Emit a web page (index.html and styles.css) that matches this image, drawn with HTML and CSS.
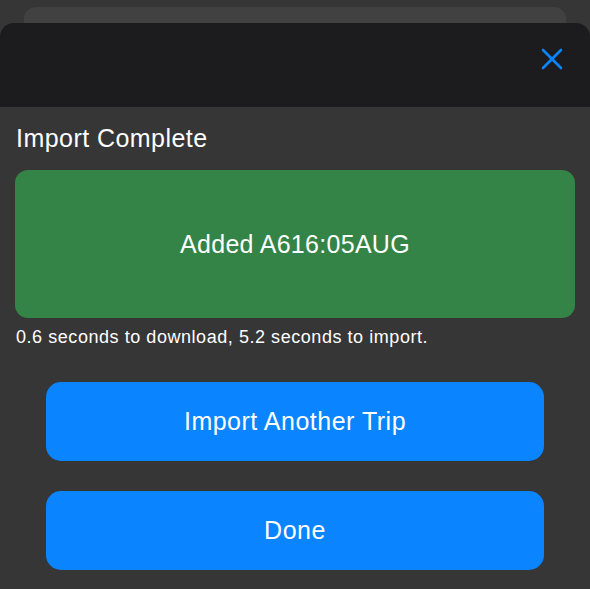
FILE: index.html
```html
<html lang="en">
<head>
    <meta charset="UTF-8">
    <meta name="viewport" content="width=device-width, initial-scale=1.0">
    <title>Import Complete</title>
    <link rel="stylesheet" href="styles.css">
</head>
<body>
    <div class="back-card"></div>
    <div class="sheet-header">
        <button class="close-btn" aria-label="Close">
            <svg width="22" height="22" viewBox="0 0 22 22">
                <path d="M2 2 L20 20 M20 2 L2 20" stroke="#0a84ff" stroke-width="2.6" stroke-linecap="round" fill="none"/>
            </svg>
        </button>
    </div>
    <div class="content">
        <h1 class="title">Import Complete</h1>
        <div class="result-box">Added A616:05AUG</div>
        <p class="timing">0.6 seconds to download, 5.2 seconds to import.</p>
        <div class="actions">
            <button class="action-btn">Import Another Trip</button>
            <button class="action-btn">Done</button>
        </div>
    </div>
</body>
</html>
```

FILE: styles.css
```css
body {margin: 0; background-color: #363636; font-family: "Liberation Sans", Arial, sans-serif; color: white; padding-top: 7px;}
.back-card {height: 16px; margin: 0 24px; background-color: #414141; border-radius: 12px 12px 0 0;}
.sheet-header {height: 84px; background-color: #1c1c1e; border-radius: 14px 14px 0 0; display: flex; justify-content: flex-end; align-items: center; padding-right: 27px;}
.close-btn {background: none; border: none; padding: 0; margin-top: -13px; display: flex; cursor: pointer;}
.content {padding: 16px 15px 0 15px;}
.title {font-size: 25px; font-weight: normal; line-height: 30px; letter-spacing: 0.45px; margin: 0 0 17px 1px;}
.result-box {height: 148px; background-color: #348447; border-radius: 13px; display: flex; align-items: center; justify-content: center; font-size: 25px; letter-spacing: 0.3px;}
.timing {font-size: 18px; line-height: 22px; letter-spacing: 0.55px; margin: 8px 0 0 1px;}
.actions {display: flex; flex-direction: column; gap: 30px; margin: 34px 31px 0 31px;}
.action-btn {height: 79px; background-color: #0a84ff; color: white; border: none; border-radius: 15px; font-family: inherit; font-size: 25px; letter-spacing: 0.5px; cursor: pointer;}
```
